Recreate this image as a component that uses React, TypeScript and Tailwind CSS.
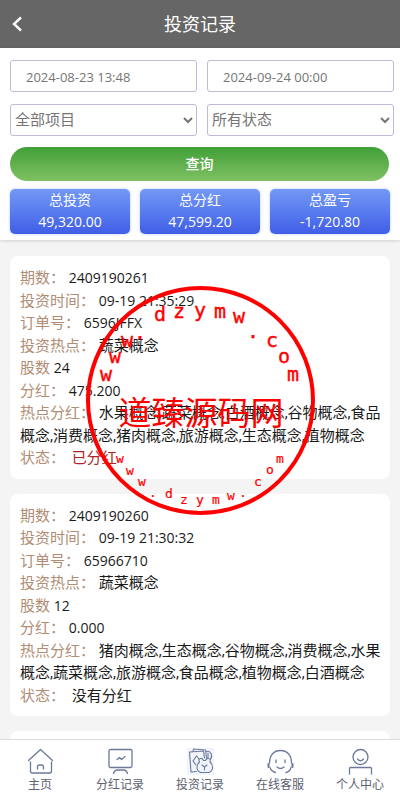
import { useState } from "react";
import type { ReactNode } from "react";
import { clsx } from "clsx";

interface InvestRecord {
  period: string;
  time: string;
  orderNo: string;
  hotspot: string;
  shares: string;
  bonus: string;
  hotBonus: string[];
  status: string;
  paid: boolean;
}

const stats = [
  { label: "总投资", value: "49,320.00" },
  { label: "总分红", value: "47,599.20" },
  { label: "总盈亏", value: "-1,720.80" },
];

const records: InvestRecord[] = [
  {
    period: "2409190261",
    time: "09-19 21:35:29",
    orderNo: "6596JFFX",
    hotspot: "蔬菜概念",
    shares: "24",
    bonus: "475.200",
    hotBonus: ["水果概念", "蔬菜概念", "白酒概念", "谷物概念", "食品概念", "消费概念", "猪肉概念", "旅游概念", "生态概念", "植物概念"],
    status: "已分红",
    paid: true,
  },
  {
    period: "2409190260",
    time: "09-19 21:30:32",
    orderNo: "65966710",
    hotspot: "蔬菜概念",
    shares: "12",
    bonus: "0.000",
    hotBonus: ["猪肉概念", "生态概念", "谷物概念", "消费概念", "水果概念", "蔬菜概念", "旅游概念", "食品概念", "植物概念", "白酒概念"],
    status: "没有分红",
    paid: false,
  },
];

// Letters of the round stamp: [char, center x, baseline y]
const stampTop: [string, number, number][] = [
  ["w", 106, 381], ["w", 115, 363], ["w", 127, 347], [".", 140, 339], ["d", 160, 321],
  ["z", 179, 318], ["y", 200, 317], ["m", 220, 318], ["w", 239, 323], [".", 253, 338],
  ["c", 272, 347], ["o", 284, 363], ["m", 293, 381],
];

const stampBottom: [string, number, number][] = [
  ["w", 120, 463], ["w", 130, 475], ["w", 142, 486], [".", 153, 497], ["d", 169, 498],
  ["z", 184, 504], ["y", 200, 504], ["m", 216, 504], ["w", 231, 500], [".", 243, 497],
  ["c", 258, 486], ["o", 270, 474], ["m", 280, 463],
];

function Stamp() {
  return (
    <svg
      viewBox="86 286 230 230"
      className="pointer-events-none absolute top-[286px] left-1/2 ml-[-114px] size-[230px] fill-[#f00]"
      textAnchor="middle"
      aria-hidden="true"
    >
      <circle cx="200.5" cy="400.5" r="112.5" fill="none" stroke="#f00" strokeWidth="4" />
      <g fontFamily="DejaVu Sans Mono, monospace" fontSize="20" stroke="#f00" strokeWidth="0.4">
        {stampTop.map(([ch, x, y]) => (
          <text key={x} x={x} y={y}>{ch}</text>
        ))}
      </g>
      <g fontFamily="DejaVu Sans Mono, monospace" fontSize="13" stroke="#f00" strokeWidth="0.2">
        {stampBottom.map(([ch, x, y]) => (
          <text key={x} x={x} y={y}>{ch}</text>
        ))}
      </g>
      <text x="201" y="425" fontFamily="Noto Sans CJK SC, sans-serif" fontSize="33">
        道臻源码网
      </text>
    </svg>
  );
}

function Num({ children }: { children: ReactNode }) {
  return <span className="font-['Open_Sans','Noto_Sans_CJK_SC',sans-serif] text-[14px] leading-none">{children}</span>;
}

function Label({ children }: { children: ReactNode }) {
  return <span className="text-[#b08d74]">{children}</span>;
}

function RecordCard({ record }: { record: InvestRecord }) {
  return (
    <article className="rounded-lg bg-white pt-[11px] pr-[8px] pb-[9px] pl-[10px] text-[15px] leading-normal text-[#1a1a1a]">
      <p><Label>期数：</Label> <Num>{record.period}</Num></p>
      <p><Label>投资时间：</Label> <Num>{record.time}</Num></p>
      <p><Label>订单号：</Label> <Num>{record.orderNo}</Num></p>
      <p><Label>投资热点：</Label> {record.hotspot}</p>
      <p><Label>股数</Label> <Num>{record.shares}</Num></p>
      <p><Label>分红：</Label> <Num>{record.bonus}</Num></p>
      <p><Label>热点分红：</Label> {record.hotBonus.join(",")}</p>
      <p>
        <Label>状态：</Label>{" "}
        <span className={clsx("ml-[3px]", record.paid && "text-[#b22222]")}>{record.status}</span>
      </p>
    </article>
  );
}

const tabs: { label: string; icon: ReactNode }[] = [
  {
    label: "主页",
    icon: (
      <>
        <path d="M2.5 13.5l12-11 12 11" />
        <path d="M4.5 15v9a2 2 0 0 0 2 2h17a2 2 0 0 0 2-2v-9" />
        <path d="M11.5 22v-2q0-2 2-2h2q2 0 2 2v2" />
      </>
    ),
  },
  {
    label: "分红记录",
    icon: (
      <>
        <rect x="3" y="2.5" width="23" height="18" rx="1.5" />
        <path d="M11 12.5l2.5-2 2 2 3.5-3" />
        <path d="M7.5 26.5q1-3.5 4-3.5h6q3 0 4 3.5" />
      </>
    ),
  },
  {
    label: "投资记录",
    icon: (
      <>
        <rect x="1" y="1" width="27" height="27" fill="#f1f4fb" stroke="none" />
        <g strokeWidth="1.1">
          <path d="M10.5 24.5L5 25 3.5 5l14-1 1 7" />
          <path d="M7 4.5l.5-2.5 12 1 1 8" />
          <path d="M10.5 9l3 3.5M10.5 9L7 14l3 4" />
          <path d="M20.5 4.5q3-1 4.5 2t-.5 6M22 6v5" />
          <path
            d="M13.5 15q-1.5-3 1-3.5 2-.5 3 2h2q1-2.5 3-2 2.5.5 1.5 3.5 2.5 2 2.5 5.5t-3.5 5h-8.5q-3.500-1.500-3.500-5t2.500-5.500Z"
            fill="#f1f4fb"
          />
          <path d="M16 18l2.5 2 2.5-2M18.5 20v3" />
        </g>
      </>
    ),
  },
  {
    label: "在线客服",
    icon: (
      <>
        <path d="M3.5 16C3.5 8 8 3.5 14.5 3.5S25.5 8 25.5 16" />
        <path d="M2.5 17v3M26.5 17v3" strokeWidth="2" />
        <path d="M4 20.5q1.5 4 5.5 5M25 20.5q-1 4-5 5" />
        <path d="M10 13v2.5M19 13v2.5M11 20q3.5 3 7 0" />
      </>
    ),
  },
  {
    label: "个人中心",
    icon: (
      <>
        <circle cx="14.5" cy="10" r="7.5" />
        <path d="M11.5 12q3 3.5 6 0" />
        <path d="M3.5 27v-5.5q0-1 1-1h20q1 0 1 1V27" />
      </>
    ),
  },
];

const fieldClass = "h-8 w-full rounded-[3px] border border-[#c5b8d6] bg-white text-[#757575] outline-none";

export default function App() {
  const [start, setStart] = useState("2024-08-23 13:48");
  const [end, setEnd] = useState("2024-09-24 00:00");

  return (
    <div className="relative flex h-screen flex-col overflow-hidden bg-[#f4f4f4] font-[Roboto,'Noto_Sans_CJK_SC',sans-serif]">
      <header className="grid h-12 shrink-0 grid-cols-[40px_1fr_40px] items-center bg-[#666] text-white">
        <button type="button" aria-label="返回" className="flex h-full items-center pl-[11px]">
          <svg viewBox="0 0 12 16" className="h-4 w-3" fill="none" stroke="currentColor" strokeWidth="2.4">
            <path d="M10 1.5L3 8l7 6.5" />
          </svg>
        </button>
        <h1 className="text-center text-[18px]">投资记录</h1>
      </header>

      <section className="relative shrink-0 bg-white pt-3 pb-[6px] shadow-[0_1px_3px_rgba(0,0,0,0.15)]">
        <form onSubmit={(e) => e.preventDefault()}>
          <div className="grid grid-cols-2 gap-x-[10px] gap-y-3 pr-[6px] pl-[10px]">
            <input
              aria-label="开始时间"
              value={start}
              onChange={(e) => setStart(e.target.value)}
              className={clsx(fieldClass, "px-[15px] pt-[2px] font-['Open_Sans',sans-serif] text-[13px]")}
            />
            <input
              aria-label="结束时间"
              value={end}
              onChange={(e) => setEnd(e.target.value)}
              className={clsx(fieldClass, "px-[15px] pt-[2px] font-['Open_Sans',sans-serif] text-[13px]")}
            />
            {["全部项目", "所有状态"].map((option) => (
              <select key={option} aria-label={option} className={clsx(fieldClass, "text-[15px]")}>
                <option>{option}</option>
              </select>
            ))}
          </div>
          <div className="mt-[11px] pr-[11px] pl-[10px]">
            <button
              type="submit"
              className="h-[34px] w-full rounded-full bg-linear-to-b from-[#3f9f37] to-[#7fc163] text-[14px] font-medium text-white"
            >
              查询
            </button>
          </div>
        </form>

        <div className="mt-2 grid grid-cols-3 gap-[10px] px-[10px]">
          {stats.map(({ label, value }) => (
            <div
              key={label}
              className="flex h-[45px] flex-col items-center rounded-[5px] bg-linear-to-b from-[#7398f5] to-[#415de6] text-white shadow-[0_0_3px_rgba(80,110,240,0.4)]"
            >
              <span className="text-[14px] leading-[22px]">{label}</span>
              <span className="font-['Open_Sans',sans-serif] text-[14px] leading-[22px]">{value}</span>
            </div>
          ))}
        </div>
      </section>

      <main className="flex min-h-0 flex-1 flex-col gap-[15px] overflow-hidden px-[10px] pt-4">
        {records.map((record) => (
          <RecordCard key={record.period} record={record} />
        ))}
        <div className="h-8 shrink-0 rounded-lg bg-white" />
      </main>

      <nav className="relative grid shrink-0 grid-cols-5 border-t border-[#dcdcdc] bg-white pt-[7px] pb-[6px]">
        {tabs.map(({ label, icon }) => (
          <a key={label} href="#" className="flex flex-col items-center text-[12px] leading-[18px] text-[#5c6270]">
            <svg
              viewBox="0 0 29 29"
              className="size-[29px]"
              fill="none"
              stroke="#6b7a99"
              strokeWidth="1.3"
              strokeLinecap="round"
              strokeLinejoin="round"
            >
              {icon}
            </svg>
            {label}
          </a>
        ))}
      </nav>

      <Stamp />
    </div>
  );
}
